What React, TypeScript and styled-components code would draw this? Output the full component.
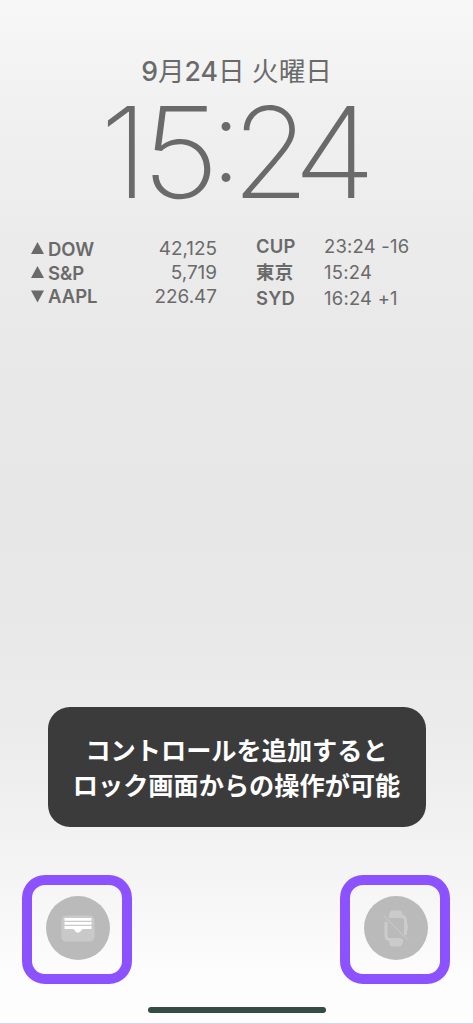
import React from "react";
import styled, { createGlobalStyle } from "styled-components";

const GlobalStyle = createGlobalStyle`
  * { box-sizing: border-box; }
  body { margin: 0; }
`;

const ink = "#6a6a6a";

const Screen = styled.main`
  display: flex;
  flex-direction: column;
  align-items: center;
  width: 473px;
  height: 1024px;
  overflow: hidden;
  color: ${ink};
  font-family: Inter, "Noto Sans CJK JP", sans-serif;
  background: linear-gradient(#f7f7f7 0, #f0f0f0 120px, #ebebeb 250px, #e9e9e9 340px, #e7e7e7 470px, #e7e7e7 545px, #e9e9e9 650px, #ececec 740px, #f4f4f4 870px, #fdfdfd 980px, #fdfdfd 100%);
  border-bottom: 1px solid #dcd2f0;
`;

const DateLine = styled.div`
  margin-top: 53px;
  height: 36px;
  line-height: 36px;
  font-size: 26.6px;
  font-weight: 500;
  white-space: nowrap;
`;

const DateKanji = styled.span`
  font-weight: 400;
`;

const Clock = styled.time`
  display: flex;
  justify-content: center;
  height: 126px;
  line-height: 126px;
  font-size: 126px;
  font-weight: 180;
`;

const Digit = styled.span<{ $gap?: number; $stretch?: number }>`
  margin-right: ${(p) => p.$gap ?? 0}px;
  transform: scaleX(${(p) => p.$stretch ?? 1});
`;

const Colon = styled.span`
  margin: 0 -10px 0 1.5px;
  font-size: 114px;
  font-weight: 170;
  transform: translateY(-12px);
`;

const Widgets = styled.section`
  display: flex;
  width: 100%;
  height: 75px;
  margin-top: 22px;
  padding-left: 31px;
  font-size: 18.5px;
`;

const Stocks = styled.div`
  width: 186px;
  margin-right: 39px;
`;

const StockRow = styled.div`
  display: grid;
  grid-template-columns: 17px 1fr auto;
  align-items: center;
  height: 23.7px;
`;

const Arrow = styled.svg`
  width: 13px;
  height: 13px;
  fill: ${ink};
`;

const Label = styled.span`
  font-weight: 600;
  line-height: 22px;
`;

const Value = styled.span`
  white-space: pre;
`;

const StockValue = styled(Value)`
  font-size: 18.9px;
`;

const Zones = styled.div`
  margin-top: -3.5px;
`;

const ZoneRow = styled.div`
  display: grid;
  grid-template-columns: 68px auto;
  align-items: center;
  height: 25.7px;
  font-size: 18.4px;
  letter-spacing: 0.25px;
`;

const Message = styled.div`
  display: flex;
  flex-direction: column;
  justify-content: center;
  width: 378px;
  height: 120px;
  margin-top: 395px;
  padding-bottom: 1px;
  border-radius: 22px;
  background: #3b3b3b;
  color: #fff;
  font: 700 25.2px/35px "Noto Sans CJK JP", sans-serif;
  text-align: center;
  white-space: nowrap;
`;

const Controls = styled.div`
  display: flex;
  justify-content: space-between;
  width: 428px;
  margin: 48px 1px 0 0;
`;

const Highlight = styled.div`
  display: grid;
  place-items: center;
  width: 110px;
  height: 109px;
  padding: 0 0 4px 1px;
  border: 10px solid #8c52ff;
  border-radius: 23px;
`;

const RoundButton = styled.button`
  display: grid;
  place-items: center;
  width: 64px;
  height: 64px;
  padding: 0;
  border: 0;
  border-radius: 50%;
  background: #bababa;
`;

const HomeBar = styled.div`
  width: 178px;
  height: 6px;
  margin-top: 23px;
  border-radius: 3px;
  background: #344d42;
`;

const stocks = [
  { name: "DOW", value: "42,125", up: true },
  { name: "S&P", value: "5,719", up: true },
  { name: "AAPL", value: "226.47", up: false },
];

const zones = [
  { city: "CUP", time: "23:24 -16" },
  { city: "東京", time: "15:24" },
  { city: "SYD", time: "16:24 +1" },
];

const WalletIcon = () => (
  <svg width="64" height="64" viewBox="0 0 64 64">
    <rect x="15.5" y="19.5" width="33" height="26" rx="4.5" fill="#c9c9c9" />
    <path d="M18.5 22h27v2.7h-27zM18.5 26h27v2.7h-27zM18.5 30h27v3h-8.5c-1.8 0-2 3.6-5 3.6s-3.200-3.600-5-3.600h-8.500z" fill="#fff" />
  </svg>
);

const WatchOffIcon = () => (
  <svg width="64" height="64" viewBox="0 0 64 64" fill="none">
    <path d="M25 19q1-4.500 3-4.500h7.500q2 0 3.500 4.500v3H25zM25 43h14v3q-1.500 4.500-3.500 4.500H28q-2 0-3-4.500z" fill="#cbcbcb" />
    <path d="M26 20.500h11.500q4 0 4 4v14.500M37 43.500H26q-4 0-4-4V26" stroke="#cbcbcb" strokeWidth="3" />
    <path d="M42 28v6" stroke="#cbcbcb" strokeWidth="3.500" />
    <path d="M19.500 19.500l25 25" stroke="#c4c4c4" strokeWidth="1.500" />
  </svg>
);

export default function App() {
  return (
    <>
      <GlobalStyle />
      <Screen>
        <DateLine>
          9<DateKanji>月</DateKanji>24<DateKanji>日 火曜日</DateKanji>
        </DateLine>
        <Clock>
          <Digit $gap={-3.5}>1</Digit>
          <Digit $gap={-8.5} $stretch={1.07}>5</Digit>
          <Colon>:</Colon>
          <Digit $gap={-13.5}>2</Digit>
          <Digit $stretch={1.08}>4</Digit>
        </Clock>
        <Widgets>
          <Stocks>
            {stocks.map((s) => (
              <StockRow key={s.name}>
                <Arrow viewBox="0 0 13 13">
                  <path d={s.up ? "M6.500 0L13 12H0z" : "M6.500 12.500L13 0.500H0z"} />
                </Arrow>
                <Label>{s.name}</Label>
                <StockValue>{s.value}</StockValue>
              </StockRow>
            ))}
          </Stocks>
          <Zones>
            {zones.map((z) => (
              <ZoneRow key={z.city}>
                <Label>{z.city}</Label>
                <Value>{z.time}</Value>
              </ZoneRow>
            ))}
          </Zones>
        </Widgets>
        <Message>
          <span>コントロールを追加すると</span>
          <span>ロック画面からの操作が可能</span>
        </Message>
        <Controls>
          <Highlight>
            <RoundButton aria-label="ウォレット"><WalletIcon /></RoundButton>
          </Highlight>
          <Highlight>
            <RoundButton aria-label="Apple Watch"><WatchOffIcon /></RoundButton>
          </Highlight>
        </Controls>
        <HomeBar />
      </Screen>
    </>
  );
}
